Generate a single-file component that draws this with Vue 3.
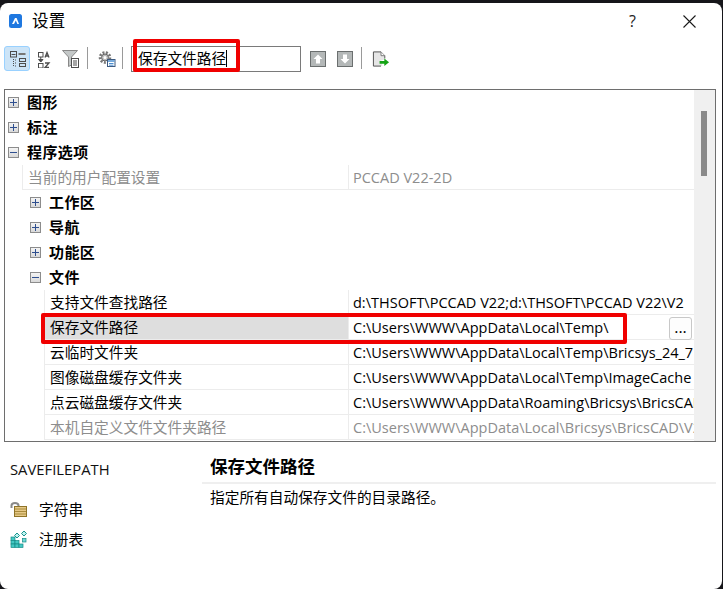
<script setup>
const rows = [
  { id: 'a', label: '图形', kind: 'cat', level: 0, sign: 'plus' },
  { id: 'b', label: '标注', kind: 'cat', level: 0, sign: 'plus' },
  { id: 'c', label: '程序选项', kind: 'cat', level: 0, sign: 'minus' },
  { id: 'd', label: '当前的用户配置设置', value: 'PCCAD V22-2D', kind: 'prop', level: 0, muted: true },
  { id: 'e', label: '工作区', kind: 'cat', level: 1, sign: 'plus' },
  { id: 'f', label: '导航', kind: 'cat', level: 1, sign: 'plus' },
  { id: 'g', label: '功能区', kind: 'cat', level: 1, sign: 'plus' },
  { id: 'h', label: '文件', kind: 'cat', level: 1, sign: 'minus' },
  { id: 'i', label: '支持文件查找路径', value: 'd:\\THSOFT\\PCCAD V22;d:\\THSOFT\\PCCAD V22\\V2', kind: 'prop', level: 1 },
  { id: 'j', label: '保存文件路径', value: 'C:\\Users\\WWW\\AppData\\Local\\Temp\\', kind: 'prop', level: 1, selected: true },
  { id: 'k', label: '云临时文件夹', value: 'C:\\Users\\WWW\\AppData\\Local\\Temp\\Bricsys_24_7', kind: 'prop', level: 1 },
  { id: 'l', label: '图像磁盘缓存文件夹', value: 'C:\\Users\\WWW\\AppData\\Local\\Temp\\ImageCache', kind: 'prop', level: 1 },
  { id: 'm', label: '点云磁盘缓存文件夹', value: 'C:\\Users\\WWW\\AppData\\Roaming\\Bricsys\\BricsCAD', kind: 'prop', level: 1 },
  { id: 'n', label: '本机自定义文件文件夹路径', value: 'C:\\Users\\WWW\\AppData\\Local\\Bricsys\\BricsCAD\\V2', kind: 'prop', level: 1, muted: true }
]
</script>

<template>
  <div class="window">
    <header class="titlebar">
      <svg class="logo" width="13" height="14" viewBox="0 0 13 14">
        <rect x="0" y="0" width="13" height="14" rx="2.5" fill="#1f78e0" />
        <path d="M3 10 L6 4 L7.6 4 L10 10 L8.4 10 L6.8 6.6 L5 10 Z" fill="#fff" />
      </svg>
      <span class="title">设置</span>
      <span class="help">?</span>
      <svg class="close" width="13" height="13" viewBox="0 0 13 13">
        <path d="M.5 .5 L12.5 12.5 M12.5 .5 L.5 12.5" stroke="#1a1a1a" stroke-width="1.1" fill="none" />
      </svg>
    </header>

    <div class="toolbar">
      <button class="tool active">
        <svg width="18" height="18" viewBox="0 0 18 18" fill="none" stroke="#4d4d4d" stroke-width="1">
          <rect x="2.500" y="1.500" width="6" height="5.500" />
          <path d="M3.500 4.500h4" />
          <path d="M10.500 4h7" stroke-width="2" stroke="#777" />
          <path d="M5.500 9v7M7 10h1M7 13h1M7 16h1" stroke-dasharray="1 1" />
          <rect x="11.500" y="8.500" width="6" height="3" />
          <rect x="11.500" y="13.500" width="6" height="3" />
        </svg>
      </button>
      <span class="tool plain t-az">
        <svg width="18" height="18" viewBox="0 0 18 18" fill="none" stroke="#4d4d4d" stroke-width="1">
          <rect x="1.500" y="2.500" width="4.500" height="4.500" />
          <rect x="1.500" y="13.500" width="4.500" height="4.500" />
          <path d="M3.750 7v5" />
          <path d="M1.500 9.500h4.500l-2.250 2.500z" fill="#4d4d4d" />
          <path d="M8 7.500l2-5 2 5M8.800 6h2.400" stroke-width="1.300" />
          <path d="M8 13h4l-4 4.500h4" stroke-width="1.300" />
        </svg>
      </span>
      <span class="tool plain t-filter">
        <svg width="18" height="18" viewBox="0 0 18 18">
          <path d="M.5 .5h15l-6 6.500V15l-3 1.500V7z" fill="#c4c8c8" stroke="#888" stroke-width="1" />
          <rect x="9.500" y="8.500" width="7" height="9" fill="#fff" stroke="#4d4d4d" />
          <path d="M11 11h4M11 13h4M11 15h4" stroke="#4d4d4d" />
        </svg>
      </span>
      <span class="sep sep-a"></span>
      <span class="tool plain t-gear">
        <svg width="18" height="18" viewBox="0 0 18 18">
          <circle cx="7" cy="7.500" r="5" fill="none" stroke="#777" stroke-width="2.600" stroke-dasharray="2 1.400" />
          <circle cx="7" cy="7.500" r="3.500" fill="#bbb" stroke="#666" />
          <circle cx="7" cy="7.500" r="1.500" fill="#fff" />
          <rect x="9.500" y="9.500" width="7.500" height="7" fill="#fff" stroke="#3d5a80" />
          <path d="M10 11h6.500" stroke="#4c8fd0" stroke-width="1.500" />
          <path d="M11 13.500h4.500M11 15.200h4.500" stroke="#4c8fd0" />
        </svg>
      </span>
      <span class="sep sep-b"></span>
      <div class="search">
        <span class="search-text">保存文件路径</span><span class="caret"></span>
      </div>
      <span class="nav up">
        <svg width="16" height="16" viewBox="0 0 16 16"><path d="M8 3.500l4.500 4.500H10v4.500H6V8H3.500z" fill="#fff" /></svg>
      </span>
      <span class="nav down">
        <svg width="16" height="16" viewBox="0 0 16 16"><path d="M8 12.500L3.500 8H6V3.500h4V8h2.500z" fill="#fff" /></svg>
      </span>
      <span class="sep sep-last"></span>
      <span class="tool plain t-export">
        <svg width="19" height="18" viewBox="0 0 19 18">
          <path d="M1.500 16.500v-15h8l3.500 3.500v5H10v3l1 3.500z" fill="#e6e6e6" />
          <path d="M9.500 16.500h-8v-15h8l4 4v3" fill="none" stroke="#4d4d4d" />
          <path d="M9.500 1.500v4h4" fill="#fff" stroke="#777" />
          <path d="M8 11h5V8.500l5 4-5 4V14H8z" fill="#16a316" />
        </svg>
      </span>
      <span class="redbox search-mark"></span>
    </div>

    <section class="grid">
      <div class="grid-body">
        <div
          v-for="row in rows"
          :key="row.id"
          class="row"
          :class="[row.kind, `level-${row.level}`, { muted: row.muted, selected: row.selected }]"
        >
          <template v-if="row.kind === 'cat'">
            <span class="box">
              <i class="h"></i>
              <i v-if="row.sign === 'plus'" class="v"></i>
            </span>
            <span class="cat-label">{{ row.label }}</span>
          </template>
          <template v-else>
            <span class="name">{{ row.label }}</span>
            <span class="value">{{ row.value }}</span>
            <span v-if="row.selected" class="dots">...</span>
          </template>
        </div>
        <div class="row tail"><span class="name"></span><span class="value"></span></div>
      </div>
      <div class="scroll"><span class="thumb"></span></div>
      <span class="redbox row-mark"></span>
    </section>

    <footer class="details">
      <div class="meta">
        <div class="var">SAVEFILEPATH</div>
        <div class="tag tag-first">
          <svg width="18" height="17" viewBox="0 0 18 17">
            <path d="M1.500 7V4.500C1.500 1 8.500 1 8.500 4.500V6" fill="none" stroke="#8a8a8a" stroke-width="2" />
            <rect x="4.500" y="5.500" width="12" height="10" fill="#e6c987" stroke="#8f7428" />
            <path d="M5 8h11M5 10.500h11M5 13h11" stroke="#a98b3d" />
          </svg>
          <span>字符串</span>
        </div>
        <div class="tag">
          <svg width="18" height="18" viewBox="0 0 18 18">
            <g fill="#43c8c2" stroke="#168a86" stroke-width=".7">
              <rect x="1" y="7" width="4" height="3.500" />
              <rect x="1" y="10.500" width="4" height="3.500" />
              <rect x="1" y="14" width="4" height="3.500" />
              <rect x="5" y="10.500" width="4" height="3.500" />
              <rect x="5" y="14" width="4" height="3.500" />
              <rect x="9" y="14" width="4" height="3.500" />
            </g>
            <path d="M7 3l2.500 2.500L7 8 4.500 5.500z" fill="#bff2ef" stroke="#17938e" />
            <path d="M14 1l2.500 2.500L14 6l-2.500-2.500z" fill="#bff2ef" stroke="#17938e" />
            <rect x="12.500" y="8.500" width="3.500" height="3.500" fill="#6fd8d3" stroke="#168a86" stroke-width=".7" />
          </svg>
          <span>注册表</span>
        </div>
      </div>
      <div class="desc">
        <h2>保存文件路径</h2>
        <p>指定所有自动保存文件的目录路径。</p>
      </div>
    </footer>
  </div>
</template>

<style>
html, body { margin: 0; background: #16161a; overflow: hidden; }
</style>

<style scoped>
.window {
  box-sizing: border-box;
  width: 722px;
  height: 586px;
  margin-top: 3px;
  background: #fff;
  border-radius: 8px;
  overflow: hidden;
  color: #000;
  font: 15px "Noto Sans CJK SC", "Noto Sans", sans-serif;
  display: flex;
  flex-direction: column;
}
.titlebar { height: 36px; display: flex; align-items: center; padding: 0 26px 0 9px; }
.title { margin-left: 10px; font-size: 16.500px; letter-spacing: .3px; position: relative; top: -1px; }
.help { margin-left: auto; font: 16px "Open Sans", sans-serif; color: #222; }
.close { margin-left: 47px; }
.toolbar {
  position: relative;
  height: 50px;
  display: flex;
  align-items: flex-start;
  padding: 7px 0 0 4px;
  box-sizing: border-box;
}
.tool { display: flex; align-items: center; justify-content: center; padding: 0; height: 25px; }
.active {
  box-sizing: border-box;
  width: 26px;
  background: #cce4f7;
  border: 1px solid #99d1ff;
  border-radius: 3px;
}
.plain { width: 18px; }
.t-az { margin-left: 7px; }
.t-filter { margin-left: 7px; }
.t-gear { margin-left: 10px; }
.t-export { margin-left: 10px; }
.sep { width: 1px; height: 22px; margin: 1px 0 0 8px; background: #9a9a9a; }
.sep-a { margin-left: 7px; }
.sep-b { margin-left: 6px; }
.search {
  box-sizing: border-box;
  width: 170px;
  height: 26px;
  margin-left: 8px;
  border: 1px solid #7a7a7a;
  display: flex;
  align-items: center;
  padding-left: 6px;
}
.search-text { font-size: 14.700px; position: relative; top: -2px; }
.caret { width: 1px; height: 17px; margin: -2px 0 0 0; background: #000; }
.nav {
  box-sizing: border-box;
  width: 16px;
  height: 16px;
  margin: 5px 0 0 9px;
  background: #b4b8b8;
  border: 1px solid #6b6f6f;
  display: flex;
  align-items: center;
  justify-content: center;
}
.nav svg { flex: none; }
.nav.down { margin-left: 11px; }
.sep-last { margin-left: 8px; }
.redbox {
  position: absolute;
  box-sizing: border-box;
  border: 4px solid #f00000;
  border-radius: 2px;
  pointer-events: none;
}
.search-mark { left: 133px; top: 0; width: 107px; height: 33px; }

.grid {
  position: relative;
  box-sizing: border-box;
  width: 712px;
  height: 353px;
  margin-left: 4px;
  border: 1px solid #6e6e6e;
  display: flex;
  overflow: visible;
}
.grid-body { flex: 1; min-width: 0; overflow: hidden; }
.scroll { width: 21px; background: #f0f0f0; flex: none; position: relative; }
.thumb { position: absolute; left: 7px; top: 21px; width: 6px; height: 65px; background: #8a8a8a; }
.row {
  box-sizing: border-box;
  height: 25px;
  display: flex;
  align-items: center;
  position: relative;
}
.cat { font-weight: 700; }
.cat.level-0 { padding-left: 3px; }
.cat.level-1 { padding-left: 25px; }
.box {
  position: relative;
  box-sizing: border-box;
  width: 11px;
  height: 11px;
  flex: none;
  border: 1px solid #8c8c8c;
  background: linear-gradient(#f4f4f4, #d9d9d9);
}
.box i { position: absolute; background: #2f4f8f; }
.box .h { left: 1px; right: 1px; top: 4px; height: 1px; }
.box .v { top: 1px; bottom: 1px; left: 4px; width: 1px; }
.cat-label { margin-left: 8px; letter-spacing: .4px; padding-bottom: 2px; }
.prop { display: flex; align-items: stretch; }
.prop.level-0 { margin-left: 17px; }
.prop.level-1 { margin-left: 39px; }
.name {
  box-sizing: border-box;
  display: flex;
  align-items: center;
  padding: 0 0 2px 5px;
  border-left: 1px solid #ececec;
  border-bottom: 1px solid #ececec;
  border-right: 1px solid #ececec;
  white-space: nowrap;
  overflow: hidden;
  font-size: 14.700px;
}
.prop.level-0 .name { width: 327px; }
.prop.level-1 .name { width: 305px; }
.value {
  box-sizing: border-box;
  flex: 1;
  min-width: 0;
  display: flex;
  align-items: center;
  padding-left: 4px;
  border-bottom: 1px solid #ececec;
  white-space: nowrap;
  overflow: hidden;
  font-family: "Open Sans", "Noto Sans CJK SC", sans-serif;
  font-size: 14.500px;
}
.prop:first-of-type .name { border-top: 1px solid #ececec; }
.muted .name, .muted .value { color: #8d8d8d; }
.selected .name { background: #dedede; }
.dots {
  position: absolute;
  right: 2px;
  top: 2px;
  box-sizing: border-box;
  width: 23px;
  height: 23px;
  border: 1px solid #c8c8c8;
  border-radius: 3px;
  background: #fdfdfd;
  text-align: center;
  font: 16px/19px "Open Sans", sans-serif;
}
.tail { margin-left: 39px; }
.tail .name { width: 305px; border-bottom: none; }
.tail .value { border-bottom: none; }
.row-mark { left: 36px; top: 223px; width: 586px; height: 31px; }

.details { flex: 1; display: flex; }
.meta { width: 202px; box-sizing: border-box; padding: 17px 0 0 10px; }
.var { font: 14.800px/20px "Open Sans", sans-serif; color: #111; }
.tag { display: flex; align-items: center; height: 30px; font-size: 14.700px; }
.tag svg { flex: none; margin-right: 11px; }
.tag span { position: relative; top: -1px; }
.tag-first { margin-top: 15px; }
.desc { flex: 1; padding-top: 12px; margin-right: 6px; }
.desc h2 {
  margin: 0;
  padding: 0 0 4px 8px;
  font-size: 17.500px;
  line-height: 24px;
  font-weight: 700;
  border-bottom: 2px solid #efefef;
}
.desc p { margin: 2px 0 0 8px; font-size: 14.700px; line-height: 22px; }
</style>
